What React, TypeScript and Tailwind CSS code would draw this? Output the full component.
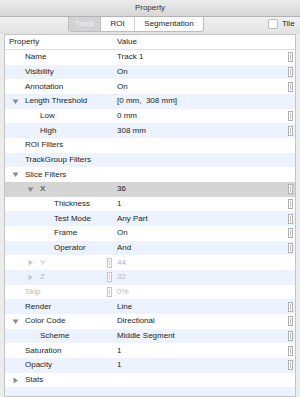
import React from 'react';

type Row = {
  label: string;
  value?: string;
  level: 0 | 1 | 2;
  expander?: 'open' | 'closed';
  disabled?: boolean;
  stepper?: boolean;
  selected?: boolean;
};

const rows: Row[] = [
  { label: 'Name', value: 'Track 1', level: 0, stepper: true },
  { label: 'Visibility', value: 'On', level: 0, stepper: true },
  { label: 'Annotation', value: 'On', level: 0, stepper: true },
  { label: 'Length Threshold', value: '[0 mm,  308 mm]', level: 0, expander: 'open' },
  { label: 'Low', value: '0 mm', level: 1, stepper: true },
  { label: 'High', value: '308 mm', level: 1, stepper: true },
  { label: 'ROI Filters', level: 0 },
  { label: 'TrackGroup Filters', level: 0 },
  { label: 'Slice Filters', level: 0, expander: 'open' },
  { label: 'X', value: '36', level: 1, expander: 'open', stepper: true, selected: true },
  { label: 'Thickness', value: '1', level: 2, stepper: true },
  { label: 'Test Mode', value: 'Any Part', level: 2, stepper: true },
  { label: 'Frame', value: 'On', level: 2, stepper: true },
  { label: 'Operator', value: 'And', level: 2, stepper: true },
  { label: 'Y', value: '44', level: 1, expander: 'closed', disabled: true },
  { label: 'Z', value: '32', level: 1, expander: 'closed', disabled: true },
  { label: 'Skip', value: '0%', level: 0, disabled: true },
  { label: 'Render', value: 'Line', level: 0, stepper: true },
  { label: 'Color Code', value: 'Directional', level: 0, expander: 'open', stepper: true },
  { label: 'Scheme', value: 'Middle Segment', level: 1, stepper: true },
  { label: 'Saturation', value: '1', level: 0, stepper: true },
  { label: 'Opacity', value: '1', level: 0, stepper: true },
  { label: 'Stats', level: 0, expander: 'closed' },
];

const indent = ['pl-[7px]', 'pl-[22px]', 'pl-[36px]'];

const Stepper = ({ faded }: { faded?: boolean }) => (
  <svg width="5" height="10" viewBox="0 0 5 10" className="shrink-0">
    <rect x="0.5" y="0.5" width="4" height="9" fill="white" stroke={faded ? '#c4c4c4' : '#b0b0b0'} />
    <line x1="2.5" y1="2" x2="2.5" y2="8" stroke={faded ? '#d0d0d0' : '#c0c0c0'} />
  </svg>
);

const Triangle = ({ dir, faded }: { dir: 'open' | 'closed'; faded?: boolean }) => (
  <svg width="7" height="7" viewBox="0 0 7 7">
    {dir === 'open' ? (
      <polygon points="0.5,1.5 6.5,1.5 3.5,6" fill={faded ? '#c8c8c8' : '#8a8a8a'} />
    ) : (
      <polygon points="1.5,0.5 6,3.5 1.5,6.5" fill={faded ? '#c8c8c8' : '#8a8a8a'} />
    )}
  </svg>
);

const App: React.FC = () => {
  return (
    <div
      className="w-[300px] h-[397px] overflow-hidden flex flex-col bg-[#ececec] text-[8px] text-[#1c1c1c]"
      style={{ fontFamily: '"Liberation Sans", Arial, sans-serif' }}
    >
      {/* Title bar */}
      <div className="h-[17px] shrink-0 flex items-center justify-center bg-gradient-to-b from-[#ececec] to-[#d6d6d6] border-b border-[#b3b3b3] text-[#333]">
        Property
      </div>

      {/* Toolbar */}
      <div className="h-[17px] shrink-0 relative bg-gradient-to-b from-[#f1f1f1] to-[#e2e2e2]">
        <div className="absolute left-[68px] top-0 h-[15px] flex border border-t-0 border-[#bdbdbd] rounded-b-[3px] overflow-hidden bg-white">
          <div className="w-[32px] flex items-center justify-center bg-[#d3d3d3] text-[#f2f2f2] border-r border-[#bdbdbd]">
            Track
          </div>
          <div className="w-[34px] flex items-center justify-center border-r border-[#d0d0d0]">ROI</div>
          <div className="w-[68px] flex items-center justify-center">Segmentation</div>
        </div>
        <div className="absolute left-[268px] top-[1px] flex items-center gap-[4px]">
          <div className="w-[10px] h-[10px] bg-white border border-[#bcbcbc] rounded-[2px]" />
          <span>Tile</span>
        </div>
      </div>

      {/* Property table */}
      <div className="flex-1 px-[4px] min-h-0">
        <div className="h-full bg-white border border-[#c4c4c4] overflow-hidden">
          <div className="h-[15px] flex items-center border-b border-[#dedede]">
            <div className="w-[112px] pl-[4px]">Property</div>
            <div className="flex-1">Value</div>
          </div>
          {rows.map((row, i) => {
            const bg = row.selected ? 'bg-[#d5d5d5]' : i % 2 === 1 ? 'bg-[#edf3fe]' : 'bg-white';
            const text = row.disabled ? 'text-[#b9b9b9]' : '';
            return (
              <div key={row.label} className={`h-[14.68px] flex items-center ${bg} ${text}`}>
                <div className={`w-[112px] flex items-center ${indent[row.level]}`}>
                  <div className="w-[13px] flex items-center">
                    {row.expander && <Triangle dir={row.expander} faded={row.disabled} />}
                  </div>
                  <span>{row.label}</span>
                  {row.disabled && (
                    <div className="ml-auto mr-[5px] flex">
                      <Stepper faded />
                    </div>
                  )}
                </div>
                <div className="flex-1 whitespace-pre">{row.value}</div>
                {row.stepper && (
                  <div className="mr-[2px] flex">
                    <Stepper />
                  </div>
                )}
              </div>
            );
          })}
          <div className="h-[14.68px] bg-[#edf3fe]" />
        </div>
      </div>
    </div>
  );
};

export default App;
